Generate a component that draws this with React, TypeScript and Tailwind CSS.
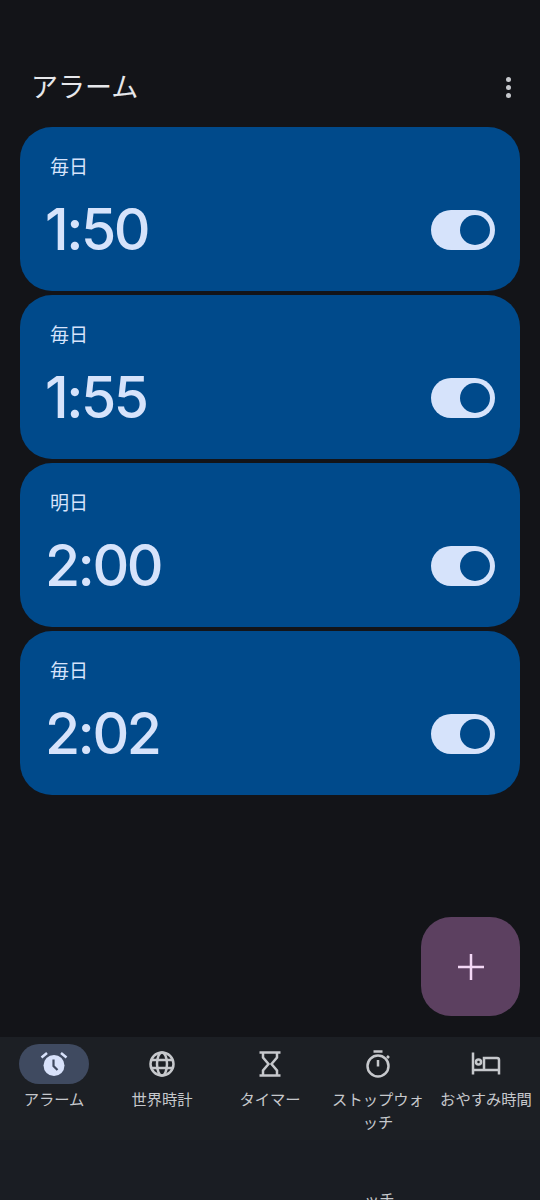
const alarms = [
  { day: '毎日', time: '1:50' },
  { day: '毎日', time: '1:55' },
  { day: '明日', time: '2:00' },
  { day: '毎日', time: '2:02' },
];

const font = "font-['Roboto','Noto_Sans_CJK_JP',sans-serif]";

function AlarmIcon() {
  return (
    <svg viewBox="0 0 28 28" className="w-7 h-7">
      <circle cx="14" cy="15.5" r="10.5" fill="#d8e2fb" />
      <path d="M13.500 9.500v6.500l4 4" fill="none" stroke="#3f4a60" strokeWidth="2.200" />
      <path d="M1.500 7.500 7 3M26.500 7.500 21 3" fill="none" stroke="#d8e2fb" strokeWidth="2.500" />
    </svg>
  );
}

function GlobeIcon() {
  return (
    <svg viewBox="0 0 28 28" className="w-7 h-7" fill="none" stroke="#c6c8cc" strokeWidth="2.500">
      <circle cx="14" cy="14" r="11.500" />
      <ellipse cx="14" cy="14" rx="5" ry="11.500" />
      <path d="M3.500 10h21M3.500 18h21" />
    </svg>
  );
}

function HourglassIcon() {
  return (
    <svg viewBox="0 0 28 28" className="w-7 h-7" fill="none" stroke="#c6c8cc" strokeWidth="2.500">
      <path d="M3.500 2.500h21M3.500 25.500h21" />
      <path d="M7 2.500v5L12.500 14 7 20.500v5M21 2.500v5L15.500 14 21 20.500v5" />
    </svg>
  );
}

function StopwatchIcon() {
  return (
    <svg viewBox="0 0 28 28" className="w-7 h-7" fill="none" stroke="#c6c8cc" strokeWidth="2.500">
      <circle cx="14" cy="16" r="10.500" />
      <path d="M9.500 1.500h9M14 10v6.500M23 6l2 2" />
    </svg>
  );
}

function BedIcon() {
  return (
    <svg viewBox="0 0 30 28" className="w-[30px] h-7" fill="none" stroke="#c6c8cc" strokeWidth="2.500">
      <path d="M2 2.500v22M2 20h26M28 24.500V10a2 2 0 0 0-2-2H13v12" />
      <circle cx="7.500" cy="12" r="2.500" />
    </svg>
  );
}

const tabs = [
  { label: 'アラーム', icon: <AlarmIcon />, active: true },
  { label: '世界時計', icon: <GlobeIcon /> },
  { label: 'タイマー', icon: <HourglassIcon /> },
  { label: 'ストップウォッチ', icon: <StopwatchIcon /> },
  { label: 'おやすみ時間', icon: <BedIcon /> },
];

export default function App() {
  return (
    <div className={`w-[540px] h-[1200px] overflow-hidden flex flex-col bg-[#131418] ${font}`}>
      {/* Header */}
      <div className="h-[127px] shrink-0 pt-[69px] pl-[31px] pr-[29px] flex items-start justify-between">
        <h1 className="text-[27px] leading-[38px] font-normal text-[#e6e7ea]">アラーム</h1>
        <div className="mt-[8px] flex flex-col gap-[3px]">
          <span className="w-[5px] h-[5px] rounded-full bg-[#c6c8cc]" />
          <span className="w-[5px] h-[5px] rounded-full bg-[#c6c8cc]" />
          <span className="w-[5px] h-[5px] rounded-full bg-[#c6c8cc]" />
        </div>
      </div>

      {/* Alarm list */}
      <div className="px-5 flex flex-col gap-[4px]">
        {alarms.map((alarm, i) => (
          <div key={i} className="h-[164px] rounded-[32px] bg-[#004a8b] pl-[25px] pr-[25px] pt-[27px]">
            <p className="pl-[5px] text-[19px] leading-[28px] text-[#d6e3fb]">{alarm.day}</p>
            <div className="mt-[14px] flex items-center justify-between">
              <span className="text-[57px] leading-[68px] font-medium tracking-[-2.5px] font-['Inter','Roboto',sans-serif] text-[#d6e3fb]">{alarm.time}</span>
              <div className="w-[64px] h-[40px] rounded-full bg-[#d6e3fb] flex items-center justify-end pr-[5px]">
                <span className="w-[30px] h-[30px] rounded-full bg-[#004a8b]" />
              </div>
            </div>
          </div>
        ))}
      </div>

      {/* FAB */}
      <div className="flex-1 flex items-end justify-end pr-5 pb-[21px]">
        <button className="w-[99px] h-[99px] rounded-[30px] bg-[#5c4060] flex items-center justify-center">
          <svg viewBox="0 0 28 28" className="w-7 h-7" stroke="#f3d8f5" strokeWidth="2.500">
            <path d="M14 1v26M1 14h26" />
          </svg>
        </button>
      </div>

      {/* Bottom nav */}
      <div className="h-[163px] shrink-0 bg-[#1a1d23] relative overflow-hidden">
        <div className="h-[103px] bg-[#1c1f24] grid grid-cols-5 pt-[7px]">
          {tabs.map((tab) => (
            <div key={tab.label} className="flex flex-col items-center">
              <div className={`w-[70px] h-10 rounded-full flex items-center justify-center ${tab.active ? 'bg-[#3f4a60]' : ''}`}>
                {tab.icon}
              </div>
              <p className="mt-[5px] px-1 text-center text-[15.3px] leading-[23px] text-[#c6c8cc]">{tab.label}</p>
            </div>
          ))}
        </div>
        <span className="absolute left-[364px] top-[152px] text-[15.3px] leading-[23px] text-[#c6c8cc]">ッチ</span>
      </div>
    </div>
  );
}
